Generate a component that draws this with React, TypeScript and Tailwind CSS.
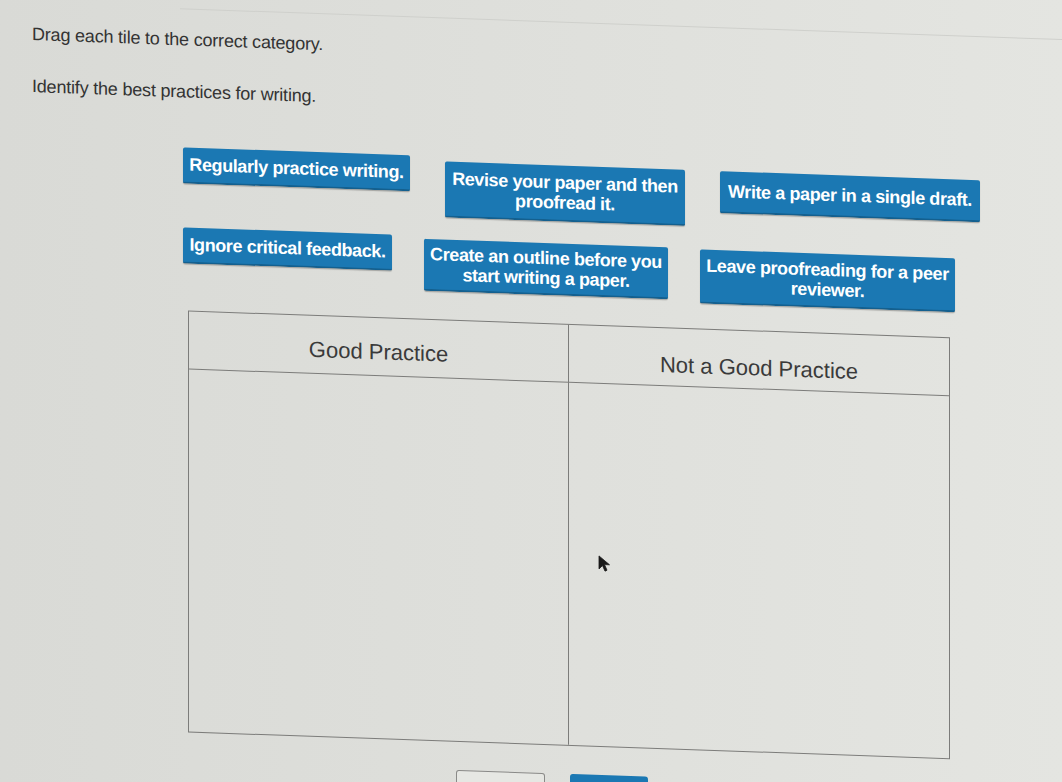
const TILE =
  "bg-[#1b78b3] text-white font-bold text-[18px] leading-[20px] tracking-[-0.4px] text-center rounded-[2px] border-b-2 border-[#14608f] shadow-[0_1px_1px_rgba(0,0,0,0.25)]";

function Cursor() {
  return (
    <svg width="14" height="18" viewBox="0 0 14 18" className="absolute left-[409px] top-[229px]">
      <path d="M1 1 L1 14 L4.5 10.5 L7 16 L9 15 L6.5 9.5 L11.5 9.5 Z" fill="#1a1a1a" stroke="#1a1a1a" strokeWidth="0.8" strokeLinejoin="round" />
    </svg>
  );
}

export default function App() {
  return (
    <div className="h-[782px] w-[1062px] overflow-hidden bg-linear-to-r from-[#d9dad6] to-[#e4e5e1] font-['Liberation_Sans',Arial,sans-serif]">
      <div className="origin-top-left skew-y-2">
        {/* faint top edge */}
        <div className="ml-[180px] h-[3px] border-b border-[#cfd0cc]" />

        {/* Instructions */}
        <div className="pl-[32px] pt-[20px] text-[18px] leading-[20px] tracking-[-0.2px] text-[#333333]">
          <p>Drag each tile to the correct category.</p>
          <p className="mt-[32px]">Identify the best practices for writing.</p>
        </div>

        {/* Tiles */}
        <div className="ml-[183px] mt-[46px]">
          <div className="flex items-start gap-[35px]">
            <div className={`${TILE} w-[227px] py-[7px]`}>Regularly practice writing.</div>
            <div className={`${TILE} w-[240px] mt-[5px] py-[7px]`}>
              Revise your paper and then
              <br />
              proofread it.
            </div>
            <div className={`${TILE} w-[260px] mt-[5px] py-[10px]`}>Write a paper in a single draft.</div>
          </div>
          <div className="flex items-start gap-[32px] mt-[19px]">
            <div className={`${TILE} w-[209px] py-[7px]`}>Ignore critical feedback.</div>
            <div className={`${TILE} w-[244px] mt-[3px] py-[5px]`}>
              Create an outline before you
              <br />
              start writing a paper.
            </div>
            <div className={`${TILE} w-[255px] mt-[4px] py-[6px]`}>
              Leave proofreading for a peer
              <br />
              reviewer.
            </div>
          </div>
        </div>

        {/* Category table */}
        <div className="relative ml-[188px] mt-[25px] w-[762px] h-[422px] border-[1.5px] border-[#7c7c7a] grid grid-cols-2 grid-rows-[58px_1fr] text-[#3a3a3a]">
          <div className="border-r-[1.5px] border-b-[1.5px] border-[#7c7c7a] text-center text-[22px] leading-[24px] pt-[22px]">
            Good Practice
          </div>
          <div className="border-b-[1.5px] border-[#7c7c7a] text-center text-[22px] leading-[24px] pt-[25px]">
            Not a Good Practice
          </div>
          <div className="border-r-[1.5px] border-[#7c7c7a]" />
          <div />
          <Cursor />
        </div>

        {/* Bottom buttons */}
        <div className="ml-[456px] mt-[28px] flex items-start gap-[25px]">
          <div className="w-[89px] h-[32px] rounded-[3px] border border-[#8a8a88] bg-[#e6e7e3]" />
          <div className="w-[78px] h-[32px] rounded-[3px] bg-[#1b78b3]" />
        </div>
      </div>
    </div>
  );
}
